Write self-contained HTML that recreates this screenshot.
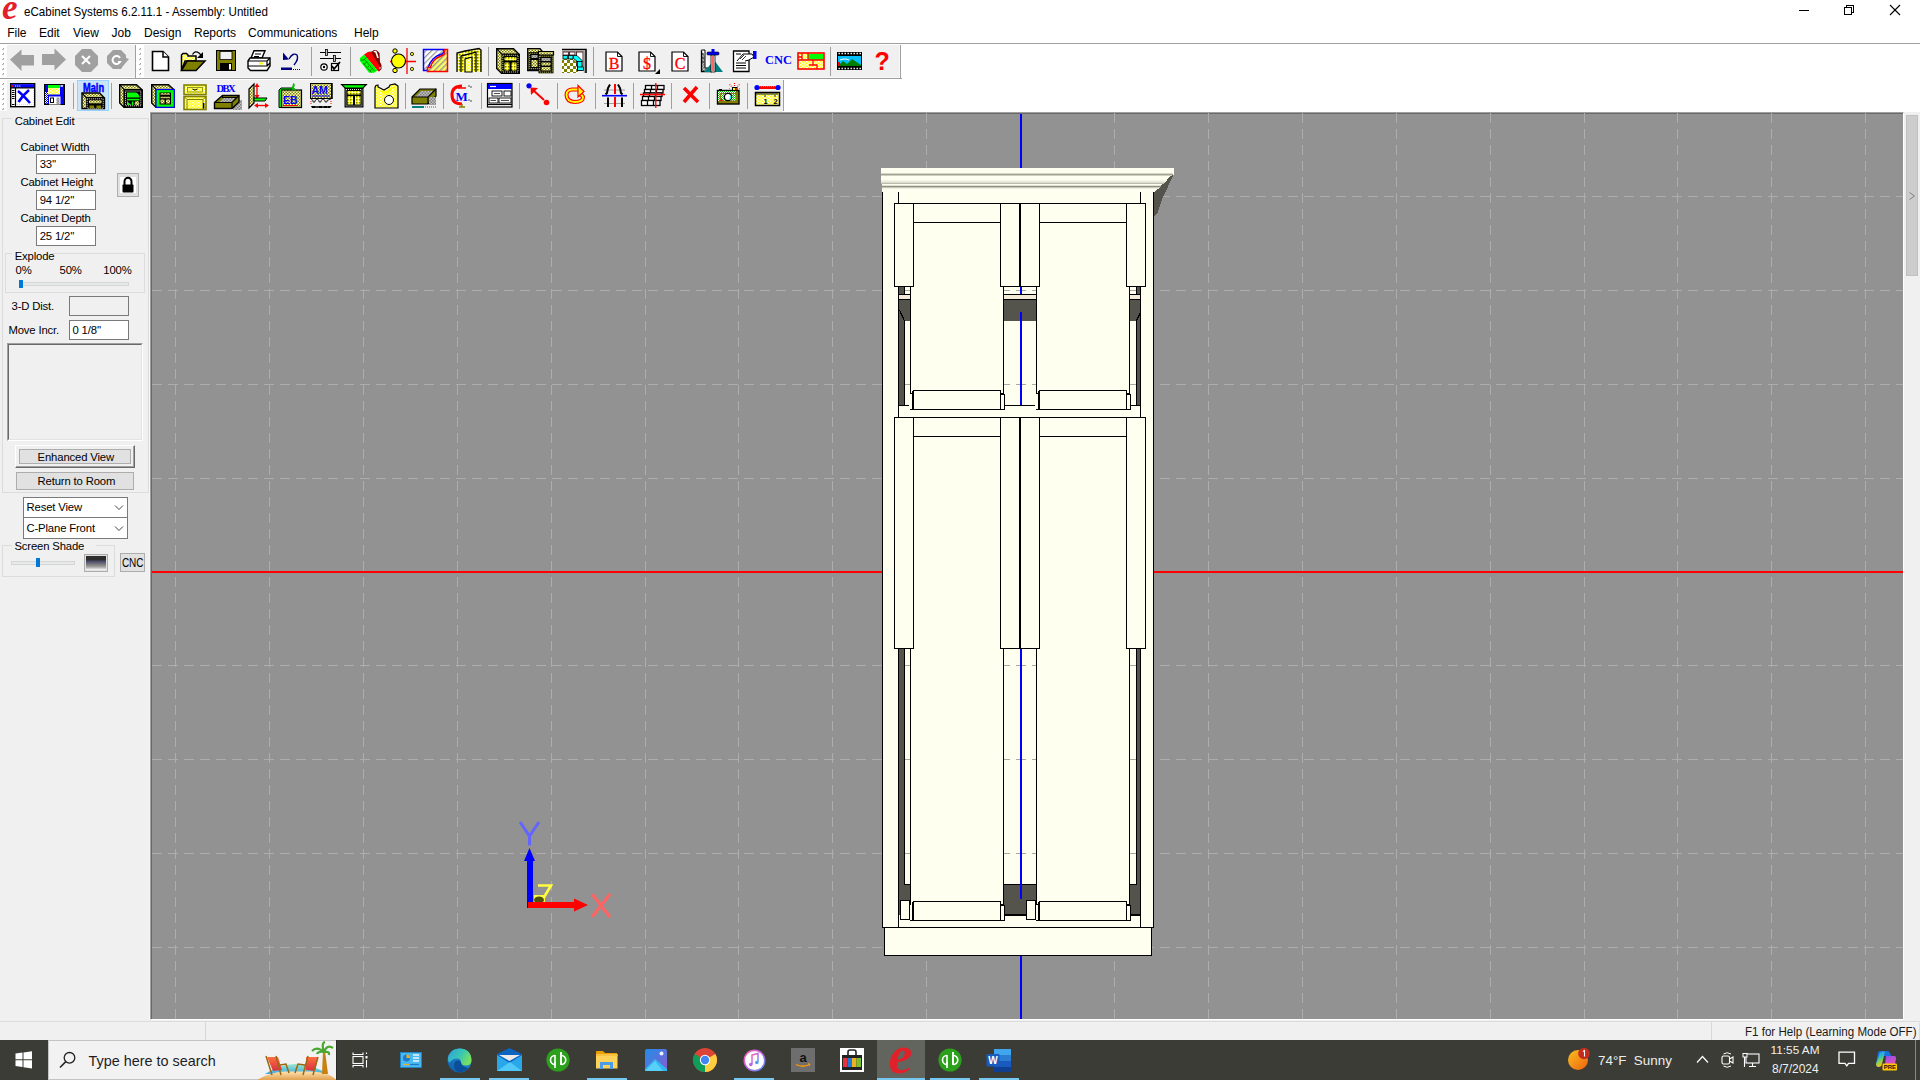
<!DOCTYPE html><html><head><meta charset="utf-8"><style>
*{margin:0;padding:0;box-sizing:border-box}
html,body{width:1920px;height:1080px;overflow:hidden;background:#fff;font-family:"Liberation Sans",sans-serif}
.t{position:absolute;line-height:1;white-space:pre}
svg{position:absolute;overflow:visible}
</style></head><body><div style="position:absolute;left:0px;top:0px;width:1920px;height:43px;background:#fff"></div>
<div class="t " style="left:23.50px;top:5.50px;font-size:12.4px;color:#000;transform:scaleX(0.935);transform-origin:left">eCabinet Systems 6.2.11.1 - Assembly: Untitled</div>
<div class="t" style="left:2px;top:-9.8px;font-family:'Liberation Serif';font-style:italic;font-weight:bold;font-size:35px;color:#e2202a">e</div>
<svg style="left:0;top:0" width="1920" height="43"><g stroke="#000" stroke-width="1" fill="none" shape-rendering="crispEdges"><line x1="1799" y1="10.5" x2="1809" y2="10.5"/><rect x="1844.5" y="7.5" width="7" height="7"/><polyline points="1846.5,7.5 1846.5,5.5 1853.5,5.5 1853.5,12.5 1851.5,12.5"/></g><g stroke="#000" stroke-width="1.1" fill="none"><line x1="1890" y1="5" x2="1900" y2="15"/><line x1="1900" y1="5" x2="1890" y2="15"/></g></svg>
<div class="t " style="left:7.20px;top:26.84px;font-size:12px;color:#000;">File</div>
<div class="t " style="left:39.00px;top:26.84px;font-size:12px;color:#000;">Edit</div>
<div class="t " style="left:73.00px;top:26.84px;font-size:12px;color:#000;">View</div>
<div class="t " style="left:111.50px;top:26.84px;font-size:12px;color:#000;">Job</div>
<div class="t " style="left:144.00px;top:26.84px;font-size:12px;color:#000;">Design</div>
<div class="t " style="left:194.00px;top:26.84px;font-size:12px;color:#000;">Reports</div>
<div class="t " style="left:248.00px;top:26.84px;font-size:12px;color:#000;">Communications</div>
<div class="t " style="left:354.00px;top:26.84px;font-size:12px;color:#000;">Help</div>
<div style="position:absolute;left:0px;top:43px;width:1920px;height:1px;background:#a0a0a0"></div>
<div style="position:absolute;left:0px;top:44px;width:1920px;height:69px;background:#fff"></div>
<div style="position:absolute;left:7px;top:45px;width:128px;height:32px;background:#f0f0f0"></div>
<div style="position:absolute;left:135px;top:45px;width:1px;height:33px;background:#a0a0a0"></div>
<div style="position:absolute;left:144px;top:45px;width:756px;height:32px;background:#f0f0f0"></div>
<div style="position:absolute;left:0px;top:78px;width:902px;height:1px;background:#a0a0a0"></div>
<div style="position:absolute;left:144px;top:77px;width:756px;height:1px;background:#f8f8f8"></div>
<div style="position:absolute;left:7px;top:80px;width:776px;height:31px;background:#f0f0f0"></div>
<div style="position:absolute;left:0px;top:111px;width:783px;height:1px;background:#f0f0f0"></div>
<div style="position:absolute;left:3px;top:48px;width:1px;height:1px;background:#a0a0a0"></div>
<div style="position:absolute;left:2px;top:49px;width:1px;height:1px;background:#b0b0b0"></div>
<div style="position:absolute;left:3px;top:49px;width:1px;height:1px;background:#c8c8c8"></div>
<div style="position:absolute;left:3px;top:53px;width:1px;height:1px;background:#a0a0a0"></div>
<div style="position:absolute;left:2px;top:54px;width:1px;height:1px;background:#b0b0b0"></div>
<div style="position:absolute;left:3px;top:54px;width:1px;height:1px;background:#c8c8c8"></div>
<div style="position:absolute;left:3px;top:58px;width:1px;height:1px;background:#a0a0a0"></div>
<div style="position:absolute;left:2px;top:59px;width:1px;height:1px;background:#b0b0b0"></div>
<div style="position:absolute;left:3px;top:59px;width:1px;height:1px;background:#c8c8c8"></div>
<div style="position:absolute;left:3px;top:63px;width:1px;height:1px;background:#a0a0a0"></div>
<div style="position:absolute;left:2px;top:64px;width:1px;height:1px;background:#b0b0b0"></div>
<div style="position:absolute;left:3px;top:64px;width:1px;height:1px;background:#c8c8c8"></div>
<div style="position:absolute;left:3px;top:68px;width:1px;height:1px;background:#a0a0a0"></div>
<div style="position:absolute;left:2px;top:69px;width:1px;height:1px;background:#b0b0b0"></div>
<div style="position:absolute;left:3px;top:69px;width:1px;height:1px;background:#c8c8c8"></div>
<div style="position:absolute;left:3px;top:73px;width:1px;height:1px;background:#a0a0a0"></div>
<div style="position:absolute;left:2px;top:74px;width:1px;height:1px;background:#b0b0b0"></div>
<div style="position:absolute;left:3px;top:74px;width:1px;height:1px;background:#c8c8c8"></div>
<div style="position:absolute;left:140px;top:48px;width:1px;height:1px;background:#a0a0a0"></div>
<div style="position:absolute;left:139px;top:49px;width:1px;height:1px;background:#b0b0b0"></div>
<div style="position:absolute;left:140px;top:49px;width:1px;height:1px;background:#c8c8c8"></div>
<div style="position:absolute;left:140px;top:53px;width:1px;height:1px;background:#a0a0a0"></div>
<div style="position:absolute;left:139px;top:54px;width:1px;height:1px;background:#b0b0b0"></div>
<div style="position:absolute;left:140px;top:54px;width:1px;height:1px;background:#c8c8c8"></div>
<div style="position:absolute;left:140px;top:58px;width:1px;height:1px;background:#a0a0a0"></div>
<div style="position:absolute;left:139px;top:59px;width:1px;height:1px;background:#b0b0b0"></div>
<div style="position:absolute;left:140px;top:59px;width:1px;height:1px;background:#c8c8c8"></div>
<div style="position:absolute;left:140px;top:63px;width:1px;height:1px;background:#a0a0a0"></div>
<div style="position:absolute;left:139px;top:64px;width:1px;height:1px;background:#b0b0b0"></div>
<div style="position:absolute;left:140px;top:64px;width:1px;height:1px;background:#c8c8c8"></div>
<div style="position:absolute;left:140px;top:68px;width:1px;height:1px;background:#a0a0a0"></div>
<div style="position:absolute;left:139px;top:69px;width:1px;height:1px;background:#b0b0b0"></div>
<div style="position:absolute;left:140px;top:69px;width:1px;height:1px;background:#c8c8c8"></div>
<div style="position:absolute;left:140px;top:73px;width:1px;height:1px;background:#a0a0a0"></div>
<div style="position:absolute;left:139px;top:74px;width:1px;height:1px;background:#b0b0b0"></div>
<div style="position:absolute;left:140px;top:74px;width:1px;height:1px;background:#c8c8c8"></div>
<div style="position:absolute;left:3px;top:83px;width:1px;height:1px;background:#a0a0a0"></div>
<div style="position:absolute;left:2px;top:84px;width:1px;height:1px;background:#b0b0b0"></div>
<div style="position:absolute;left:3px;top:84px;width:1px;height:1px;background:#c8c8c8"></div>
<div style="position:absolute;left:3px;top:88px;width:1px;height:1px;background:#a0a0a0"></div>
<div style="position:absolute;left:2px;top:89px;width:1px;height:1px;background:#b0b0b0"></div>
<div style="position:absolute;left:3px;top:89px;width:1px;height:1px;background:#c8c8c8"></div>
<div style="position:absolute;left:3px;top:93px;width:1px;height:1px;background:#a0a0a0"></div>
<div style="position:absolute;left:2px;top:94px;width:1px;height:1px;background:#b0b0b0"></div>
<div style="position:absolute;left:3px;top:94px;width:1px;height:1px;background:#c8c8c8"></div>
<div style="position:absolute;left:3px;top:98px;width:1px;height:1px;background:#a0a0a0"></div>
<div style="position:absolute;left:2px;top:99px;width:1px;height:1px;background:#b0b0b0"></div>
<div style="position:absolute;left:3px;top:99px;width:1px;height:1px;background:#c8c8c8"></div>
<div style="position:absolute;left:3px;top:103px;width:1px;height:1px;background:#a0a0a0"></div>
<div style="position:absolute;left:2px;top:104px;width:1px;height:1px;background:#b0b0b0"></div>
<div style="position:absolute;left:3px;top:104px;width:1px;height:1px;background:#c8c8c8"></div>
<div style="position:absolute;left:3px;top:108px;width:1px;height:1px;background:#a0a0a0"></div>
<div style="position:absolute;left:2px;top:109px;width:1px;height:1px;background:#b0b0b0"></div>
<div style="position:absolute;left:3px;top:109px;width:1px;height:1px;background:#c8c8c8"></div>
<svg width="0" height="0" style="position:absolute"><defs>
<pattern id="dy" width="3" height="3" patternUnits="userSpaceOnUse"><rect width="3" height="3" fill="#ffff00"/><rect x="0" y="0" width="1.5" height="1.5" fill="#808000"/><rect x="1.5" y="1.5" width="1.5" height="1.5" fill="#fffff0"/></pattern>
<pattern id="dyw" width="3" height="3" patternUnits="userSpaceOnUse"><rect width="3" height="3" fill="#ffff00"/><rect x="0" y="0" width="1.5" height="1.5" fill="#fff"/><rect x="1.5" y="1.5" width="1.5" height="1.5" fill="#fff"/></pattern>
<pattern id="dg" width="3" height="3" patternUnits="userSpaceOnUse"><rect width="3" height="3" fill="#c0c0c0"/><rect x="0" y="0" width="1.5" height="1.5" fill="#808080"/><rect x="1.5" y="1.5" width="1.5" height="1.5" fill="#808080"/></pattern>
<pattern id="dow" width="6" height="6" patternUnits="userSpaceOnUse"><rect width="6" height="6" fill="#fff"/><rect x="0" y="0" width="3" height="3" fill="#808000"/><rect x="3" y="3" width="3" height="3" fill="#808000"/></pattern>
<pattern id="hat" width="4" height="4" patternUnits="userSpaceOnUse" patternTransform="rotate(45)"><rect width="4" height="4" fill="#fff"/><rect width="1.3" height="4" fill="#9a9a9a"/></pattern>
<pattern id="haty" width="4" height="4" patternUnits="userSpaceOnUse" patternTransform="rotate(45)"><rect width="4" height="4" fill="#ffff60"/><rect width="1.5" height="4" fill="#9a9a9a"/></pattern>
<pattern id="dl" width="3" height="3" patternUnits="userSpaceOnUse"><rect width="3" height="3" fill="#ffffd0"/><rect x="0" y="0" width="1.5" height="1.5" fill="#808000"/><rect x="1.5" y="1.5" width="1.5" height="1.5" fill="#808000"/></pattern><pattern id="dyl" width="3" height="3" patternUnits="userSpaceOnUse"><rect width="3" height="3" fill="#ffff00"/><rect x="0" y="0" width="1.5" height="1.5" fill="#fff"/><rect x="1.5" y="1.5" width="1.5" height="1.5" fill="#ffffa0"/></pattern>
<pattern id="dgn" width="3" height="3" patternUnits="userSpaceOnUse"><rect width="3" height="3" fill="#00c000"/><rect x="0" y="0" width="1.5" height="1.5" fill="#606060"/><rect x="1.5" y="1.5" width="1.5" height="1.5" fill="#606060"/></pattern>
</defs></svg>
<svg style="left:10px;top:49px" width="25" height="23" viewBox="0 0 25 23"><polygon points="0,10.5 11.5,0.5 11.5,6 24,6 24,16.5 11.5,16.5 11.5,22 " fill="#a0a0a0"/></svg>
<svg style="left:42px;top:48px" width="25" height="23" viewBox="0 0 25 23"><polygon points="24,11.5 12.5,0.5 12.5,6 0,6 0,17 12.5,17 12.5,22.5" fill="#a0a0a0"/></svg>
<svg style="left:75px;top:49px" width="24" height="24" viewBox="0 0 24 24"><polygon points="7,0 16,0 23,7 23,16 16,23 7,23 0,16 0,7" fill="#a0a0a0"/><path d="M7,7 L15,15 M15,7 L7,15" stroke="#fff" stroke-width="2"/></svg>
<svg style="left:107px;top:50px" width="23" height="20" viewBox="0 0 23 20"><polygon points="6,0 14,0 19,5 19,8 22,9 16,16 14,19 6,19 0,13 0,6" fill="#a0a0a0"/><path d="M13,8 A4,4 0 1 0 13,12 L11,12" fill="none" stroke="#fff" stroke-width="2"/></svg>
<svg style="left:151px;top:50px" width="19" height="22" viewBox="0 0 19 22"><path d="M1.5,20.5 V1.5 H12 L17.5,7 V20.5 Z" fill="#fff" stroke="#000" stroke-width="1.6"/><path d="M12,1.5 V7 H17.5" fill="#fff" stroke="#000" stroke-width="1.5"/></svg>
<svg style="left:180px;top:50px" width="26" height="22" viewBox="0 0 26 22"><path d="M1.5,20.5 V5 L3,3.5 H6.5 L8,5 V6 H16 V11 H5 L1.5,20.5 Z" fill="url(#dyw)" stroke="#000" stroke-width="1.5"/><polygon points="1.5,20.5 7,11 25,11 16,20.5" fill="#808000" stroke="#000" stroke-width="1.5"/><path d="M12.5,4.5 Q15,0 19,3 L21,5" fill="none" stroke="#000" stroke-width="1.2"/><polygon points="23,2 23,8 17,8" fill="#000"/></svg>
<svg style="left:216px;top:50px" width="20" height="21" viewBox="0 0 20 21"><rect x="0.5" y="0.5" width="19" height="20" fill="#808000" stroke="#000"/><rect x="4" y="1.5" width="12" height="8" fill="#f0f0f0" stroke="#000" stroke-width="0.8"/><rect x="4" y="13" width="12" height="7.5" fill="#000"/><rect x="13" y="14" width="2" height="5.5" fill="#fff"/></svg>
<svg style="left:247px;top:50px" width="25" height="22" viewBox="0 0 25 22"><polygon points="7,0.8 18,0.8 15,8 4,8" fill="#fff" stroke="#000" stroke-width="1.4"/><path d="M8,4 H14 M7,6.5 H12" stroke="#000"/><path d="M1,11 L3,8 H17 L23,8 V16 L20,20.5 H3.5 L1,18 Z" fill="#fff" stroke="#000" stroke-width="1.4"/><path d="M1,11 H20 V16 H1 M20,11 L23,8 M20,16 L23,13" fill="none" stroke="#000" stroke-width="1.2"/><rect x="12" y="12.5" width="4" height="2" fill="#ff0"/></svg>
<svg style="left:280px;top:51px" width="23" height="20" viewBox="0 0 23 20"><path d="M9,8 Q13,1 17,4 Q19,8 14,14" fill="none" stroke="#000080" stroke-width="1.4"/><polygon points="3,1.5 9,8.5 3,9" fill="#000080"/><rect x="1" y="16.5" width="11" height="2.5" fill="#000080"/><path d="M13,18.5 H21" stroke="#000080" stroke-dasharray="1 1"/></svg>
<div style="position:absolute;left:311px;top:47px;width:1px;height:29px;background:#a0a0a0"></div>
<svg style="left:319px;top:49px" width="24" height="24" viewBox="0 0 24 24"><path d="M1,3.5 H22 M1,9.5 H22" stroke="#000" stroke-width="1.2"/><rect x="6.5" y="0.5" width="2" height="6" fill="#c0c0c0" stroke="#000" stroke-width="0.8"/><rect x="14.5" y="6.5" width="2" height="6" fill="#c0c0c0" stroke="#000" stroke-width="0.8"/><circle cx="5" cy="18" r="3.2" fill="#fff" stroke="#000" stroke-width="1.2"/><circle cx="5" cy="18" r="1.2" fill="#000"/><rect x="12.5" y="14.5" width="7" height="7" fill="#fff" stroke="#000" stroke-width="1.2"/><path d="M13,17 L15,20 L21,13" fill="none" stroke="#000" stroke-width="1.8"/></svg>
<div style="position:absolute;left:350px;top:47px;width:1px;height:29px;background:#a0a0a0"></div>
<svg style="left:359px;top:48px" width="23" height="26" viewBox="0 0 23 26"><polygon points="8.5,4 13,3.5 15,2 18,2.5 20.5,5 21,14 22.5,17 22.5,21 20,23.5 19,22" fill="#800000"/><polygon points="5,6.5 9,4 12,4 20.5,18 21,21.5 19.5,23.5 18.5,22.5" fill="#ff0000"/><polygon points="1,10 5,6.5 18.5,22.5 15,24.8 10,24.8 1,13" fill="#00ff00"/><path d="M1.5,12 L5,12 L7.5,9 M4,15 L12.5,24.5 M5.5,11.5 L15.5,23 M5,16.5 L8,13.5 M8,20 L11,17 M11,23 L14,20" stroke="#008000" stroke-width="0.9" fill="none"/><path d="M15,4 Q16,3 17,4 L19,10" stroke="#fff" stroke-width="1.6" fill="none"/><circle cx="21" cy="20" r="0.8" fill="#fff"/></svg>
<svg style="left:389px;top:48px" width="28" height="26" viewBox="0 0 28 26"><path d="M1,13.5 H27 M18,0 V26" stroke="#ff0000" stroke-width="1.3"/><circle cx="9.5" cy="13" r="7" fill="#ffff00" stroke="#000" stroke-width="1.2"/><circle cx="6" cy="3" r="2.2" fill="#ff0" stroke="#000" stroke-width="1"/><circle cx="6" cy="22.5" r="2.2" fill="#ff0" stroke="#000" stroke-width="1"/><circle cx="23" cy="6" r="1.6" fill="#ff0" stroke="#000" stroke-width="0.8"/><circle cx="23" cy="21" r="1.6" fill="#ff0" stroke="#000" stroke-width="0.8"/></svg>
<svg style="left:422px;top:48px" width="28" height="26" viewBox="0 0 28 26"><path d="M1.5,1.5 H22 V4 L20,6 L15,8 L11,11 L8,15 L6.5,19 L5,22.5 H1.5 Z" fill="url(#hat)" stroke="#0000ff" stroke-width="1.5"/><path d="M25.5,1.5 V23.5 H5.5 V19.5 H8.5 L9.5,16 L12,12.5 L15,10 L19,8 L22,6.5 L23,1.5 Z" fill="url(#haty)" stroke="#ff0000" stroke-width="1.5"/></svg>
<svg style="left:456px;top:48px" width="26" height="25" viewBox="0 0 26 25"><path d="M1,24 V5 L9,3 L23,0.5 L25,2 V24" fill="url(#dy)" stroke="#000" stroke-width="1.3"/><path d="M5,24 V8 L20,4 V24" fill="none" stroke="#000" stroke-width="1.3"/><path d="M9,24 V11 L16,9 V24 Z" fill="url(#dyw)" stroke="#000" stroke-width="1.2"/></svg>
<div style="position:absolute;left:488px;top:47px;width:1px;height:29px;background:#a0a0a0"></div>
<svg style="left:496px;top:48px" width="24" height="26" viewBox="0 0 24 26"><polygon points="0.7,0.7 17.5,0.7 23.3,6.5 23.3,25.3 5.5,25.3 0.7,20.5" fill="url(#dl)" stroke="#000" stroke-width="1.4" stroke-linejoin="miter"/><path d="M0.7,0.7 L5.5,6 H23.3" stroke="#000" stroke-width="1.2" fill="none"/><rect x="5.5" y="6" width="17.8" height="19.3" fill="#000"/><rect x="6.8" y="7.3" width="15.2" height="16.7" fill="none" stroke="#ffff80" stroke-width="0.9" stroke-dasharray="1 1"/><rect x="8.5" y="9" width="12" height="3.5" rx="1" fill="url(#dy)"/><rect x="8.5" y="14.5" width="5" height="8" rx="1" fill="url(#dy)"/><rect x="15.5" y="14.5" width="5" height="8" rx="1" fill="url(#dy)"/></svg>
<svg style="left:527px;top:48px" width="28" height="26" viewBox="0 0 28 26"><polygon points="0.7,0.7 13,0.7 15,3 15,22.5 0.7,22.5" fill="url(#dl)" stroke="#000" stroke-width="1.3" stroke-linejoin="miter"/><rect x="1.5" y="4" width="12" height="18" fill="#000"/><rect x="2.7" y="5.2" width="9.5" height="15.5" fill="none" stroke="#ffff80" stroke-width="0.9" stroke-dasharray="1 1"/><rect x="4.5" y="7" width="6" height="3" fill="url(#dg)"/><rect x="4.5" y="12" width="6" height="7" fill="url(#dl)"/><polygon points="11.5,3.5 26.5,3.5 26.5,7 11.5,7" fill="url(#dl)" stroke="#000" stroke-width="1.2"/><rect x="11.5" y="7" width="15" height="18.3" fill="#000"/><rect x="12.7" y="8.2" width="12.6" height="15.9" fill="none" stroke="#ffff80" stroke-width="0.9" stroke-dasharray="1 1"/><rect x="14.5" y="10" width="9" height="3" fill="url(#dg)"/><rect x="14.5" y="14.5" width="9" height="3" fill="url(#dl)"/><rect x="14.5" y="19" width="9" height="3.5" fill="url(#dl)"/></svg>
<svg style="left:561px;top:48px" width="26" height="26" viewBox="0 0 26 26"><polygon points="1,11 12,11 17,16 17,25 1,25" fill="url(#dow)"/><path d="M1,1.5 H25 V25" fill="none" stroke="#000" stroke-width="1.6"/><path d="M1,3.2 H23.3 V25" fill="none" stroke="#909090" stroke-width="1"/><g fill="#fff" stroke="#300" stroke-width="0.8"><rect x="2" y="4" width="5.5" height="3"/><rect x="8.5" y="4" width="5.5" height="3"/><rect x="15.5" y="4" width="6.5" height="14"/></g><g fill="#00ffff" stroke="#000" stroke-width="0.8"><rect x="2" y="7.5" width="4.5" height="3.5"/><rect x="7.5" y="7.5" width="4.5" height="3.5"/><polygon points="12.5,7.5 16,7.5 21,12.5 21,14 17,14 12.5,10.5"/><rect x="16.5" y="13.5" width="4.5" height="9"/><rect x="16.5" y="19" width="6" height="3.5"/></g></svg>
<div style="position:absolute;left:593px;top:47px;width:1px;height:29px;background:#a0a0a0"></div>
<svg style="left:604.5px;top:50.5px" width="19" height="22" viewBox="0 0 19 22"><path d="M1,20 V1 H12.5 L17,5.5 V20 Z" fill="#fff" stroke="#000" stroke-width="1.2"/><path d="M12.5,1 V5.5 H17" fill="none" stroke="#000" stroke-width="0.9"/><text x="9" y="17.8" font-family="Liberation Serif" font-size="16" fill="#ff0000" text-anchor="middle" stroke="#ff0000" stroke-width="0.3">B</text></svg>
<svg style="left:637.5px;top:50.5px" width="19" height="22" viewBox="0 0 19 22"><path d="M1,20 V1 H12.5 L17,5.5 V20 Z" fill="#fff" stroke="#000" stroke-width="1.2"/><path d="M12.5,1 V5.5 H17" fill="none" stroke="#000" stroke-width="0.9"/><text x="9" y="17.8" font-family="Liberation Serif" font-size="16" fill="#ff0000" text-anchor="middle" stroke="#ff0000" stroke-width="0.3">$</text></svg>
<svg style="left:670.5px;top:50.5px" width="19" height="22" viewBox="0 0 19 22"><path d="M1,20 V1 H12.5 L17,5.5 V20 Z" fill="#fff" stroke="#000" stroke-width="1.2"/><path d="M12.5,1 V5.5 H17" fill="none" stroke="#000" stroke-width="0.9"/><text x="9" y="17.8" font-family="Liberation Serif" font-size="16" fill="#ff0000" text-anchor="middle" stroke="#ff0000" stroke-width="0.3">C</text></svg>
<svg style="left:655px;top:69px" width="6" height="5" viewBox="0 0 6 5"><polygon points="5,0 5,5 0,5" fill="#000"/></svg>
<svg style="left:700px;top:49px" width="25" height="24" viewBox="0 0 25 24"><path d="M1.5,1 V22.5 H12" fill="url(#dg)" stroke="#000" stroke-width="1.3"/><path d="M1.5,1 H5 V19 H12" fill="#fff" stroke="#000" stroke-width="1"/><path d="M2,5 H4 M2,9 H4 M2,13 H4 M8,20 V22" stroke="#000" stroke-width="0.8"/><polygon points="4,23 14,11 23,23" fill="#008080"/><rect x="11" y="6" width="4" height="17" fill="#fff" stroke="#000" stroke-width="0.8"/><path d="M13,7 V22" stroke="#ff0000" stroke-width="1.2"/><rect x="7" y="3" width="12" height="3" rx="1" fill="#0000ff" stroke="#000" stroke-width="0.6"/><rect x="11.5" y="0" width="3" height="3" fill="#0000ff"/></svg>
<svg style="left:732px;top:49px" width="26" height="24" viewBox="0 0 26 24"><path d="M1.5,2 H17 V22.5 H1.5 Z" fill="#fff" stroke="#000" stroke-width="1.3"/><path d="M4,14 H14 M4,16.5 H14 M4,19 H14 M4,5 H9" stroke="#000"/><path d="M5,12 L11,5 L20,5 L22,8 L17,11 L13,12" fill="#fff" stroke="#000" stroke-width="1"/><path d="M8,10 L12,6 M10,11 L14,7" stroke="#000" stroke-width="0.8"/><rect x="21" y="2" width="3.5" height="8" fill="#0000ff"/></svg>
<div class="t " style="left:765.00px;top:55.27px;font-size:11.5px;color:#0000ff;font-family:'Liberation Serif';font-weight:bold;transform:scaleX(1.08);transform-origin:left">CNC</div>
<svg style="left:797px;top:52px" width="28" height="18" viewBox="0 0 28 18"><rect x="1" y="1" width="26" height="16" fill="url(#dyw)" stroke="#ff0000" stroke-width="1.6"/><rect x="11" y="2" width="15" height="6" fill="#00ff00"/><path d="M5,1 V8 M1,5 H5 M11,1 V8 M1,8 H27 M16,8 V13 M12,13 H20 V17" fill="none" stroke="#ff0000" stroke-width="1.3"/></svg>
<div style="position:absolute;left:830px;top:47px;width:1px;height:29px;background:#a0a0a0"></div>
<svg style="left:837px;top:52px" width="26" height="18" viewBox="0 0 26 18"><rect x="0" y="0" width="25" height="18" fill="#000"/><path d="M1.5,1.5 H24 M1.5,16.5 H24" stroke="#fff" stroke-width="1.4" stroke-dasharray="1.4 1.6"/><rect x="1" y="4" width="23" height="10" fill="#00c0ff"/><path d="M1,14 L6,9 L10,12 L15,7 L24,13 V14 Z" fill="#008000"/><path d="M3,8 Q8,6 12,8" stroke="#fff" stroke-width="1.2" fill="none"/><rect x="1" y="10" width="2" height="4" fill="#ff0000"/></svg>
<div class="t " style="left:874.50px;top:48.84px;font-size:25px;color:#ff0000;font-family:'Liberation Sans';font-weight:bold;transform:scaleX(1.0);transform-origin:left">?</div>
<div style="position:absolute;left:900px;top:45px;width:1px;height:34px;background:#a0a0a0"></div>
<div style="position:absolute;left:899px;top:45px;width:1px;height:33px;background:#f8f8f8"></div>
<svg style="left:10px;top:83px" width="26" height="25" viewBox="0 0 26 25"><rect x="0.7" y="0.7" width="24" height="23" fill="#fff" stroke="#000" stroke-width="1.4"/><rect x="1.2" y="1.2" width="23" height="3.6" fill="#0000ff"/><rect x="2" y="2.3" width="1.5" height="1.5" fill="#ff0000"/><path d="M5,3 H11" stroke="#fff" stroke-width="1.2" stroke-dasharray="1.2 0.9"/><path d="M0.7,4.8 H25 M5.5,5 V23.5" stroke="#000" stroke-width="1.2"/><path d="M2,7.5 H4.5 M2,9.5 H4.5 M2,11.5 H4.5 M2,13.5 H4.5 M2,15.5 H4.5 M2,21.5 H4.5" stroke="#000" stroke-width="1"/><path d="M8,8 Q13,12 20,20 M19,7 Q13,12 8.5,19" stroke="#0000ff" stroke-width="2.6" fill="none"/><path d="M7,21.5 H24 M23.5,7 V21" stroke="#c0c0c0" stroke-width="0.6" stroke-dasharray="1 1"/></svg>
<svg style="left:44px;top:84px" width="21" height="21" viewBox="0 0 21 21"><defs><pattern id="bw" width="2" height="2" patternUnits="userSpaceOnUse"><rect width="2" height="2" fill="#fff"/><rect width="1" height="1" fill="#0000ff"/><rect x="1" y="1" width="1" height="1" fill="#0000ff"/></pattern></defs><rect x="0.5" y="0.5" width="20" height="20" fill="#0000ff" stroke="#000" stroke-width="1"/><rect x="1" y="8" width="3" height="11.5" fill="url(#bw)"/><rect x="4" y="1" width="12" height="3" fill="#00ff00"/><rect x="4" y="4" width="12" height="6.5" fill="url(#dyw)"/><rect x="16.5" y="1.2" width="2.5" height="1.5" fill="#fff"/><rect x="5" y="12.5" width="11.5" height="8" fill="#fff"/><rect x="6.5" y="14" width="3" height="4.5" fill="none" stroke="#000"/><rect x="12.5" y="13.5" width="3" height="6.5" fill="url(#dg)"/></svg>
<div style="position:absolute;left:73px;top:83px;width:1px;height:26px;background:#a0a0a0"></div>
<div style="position:absolute;left:77px;top:80px;width:32px;height:31px;background:#cce4f7;border:1px solid #99d1ff"></div>
<div class="t " style="left:82.80px;top:81.57px;font-size:12.2px;color:#0000ff;font-family:'Liberation Sans';font-weight:bold;-webkit-text-stroke:0.5px #0000ff;transform:scaleX(0.76);transform-origin:left">Main</div>
<svg style="left:81px;top:92px" width="25" height="18" viewBox="0 0 25 18"><polygon points="1,1 18.5,1 23.5,6 23.5,16.5 1,16.5" fill="url(#dl)" stroke="#000" stroke-width="1.4" stroke-linejoin="miter"/><path d="M1,1 L5,5.5 H23.5" stroke="#000" stroke-width="1.2" fill="none"/><rect x="5" y="5.5" width="18.5" height="11" fill="#000"/><rect x="6.2" y="6.8" width="16" height="9.5" fill="none" stroke="#fff" stroke-width="0.9" stroke-dasharray="1 1"/><rect x="8" y="8.3" width="12.5" height="3" fill="url(#dl)"/><rect x="8.5" y="13.5" width="4.5" height="3" fill="#808000"/><rect x="15.5" y="13.5" width="4.5" height="3" fill="#808000"/></svg>
<div style="position:absolute;left:111px;top:83px;width:1px;height:26px;background:#a0a0a0"></div>
<svg style="left:119px;top:84px" width="24" height="24" viewBox="0 0 24 24"><polygon points="0.7,0.7 17.5,0.7 23.3,6 23.3,23.3 5,23.3 0.7,19" fill="url(#dl)" stroke="#000" stroke-width="1.4" stroke-linejoin="miter"/><path d="M0.7,0.7 L5,5.5 H23.3 M5,5.5 V23.3" stroke="#000" stroke-width="1.2" fill="none"/><rect x="5" y="5.5" width="18.3" height="17.8" fill="#000"/><rect x="6.5" y="7" width="15.3" height="14.8" fill="none" stroke="#fffff0" stroke-width="0.9" stroke-dasharray="1 1"/><polygon points="8,8.5 17,8.5 20.5,12 20.5,13.5 8,13.5" fill="#00ff00"/><path d="M17.5,9 L20,11.5" stroke="#fff" stroke-width="0.8" stroke-dasharray="1 1"/><rect x="8" y="14.8" width="12.5" height="1.6" fill="#00ff00"/><polygon points="8,17.5 12,21 8,21" fill="#00ff00"/><path d="M8,17.5 L11.5,20.5" stroke="#fff" stroke-width="0.7" stroke-dasharray="1 1"/><rect x="12.8" y="17.5" width="1.5" height="3.8" fill="#00ff00"/><circle cx="18" cy="19.3" r="2.3" fill="url(#dl)"/></svg>
<svg style="left:151px;top:84px" width="24" height="24" viewBox="0 0 24 24"><polygon points="0.7,0.7 17.5,0.7 23.3,6 23.3,23.3 5,23.3 0.7,19" fill="url(#dl)" stroke="#000" stroke-width="1.4" stroke-linejoin="miter"/><path d="M0.7,0.7 L5,5.5 H23.3 M5,5.5 V23.3" stroke="#000" stroke-width="1.2" fill="none"/><rect x="5" y="5.5" width="18.3" height="17.8" fill="#00ff00" stroke="#0000ff" stroke-width="1.2"/><rect x="8.5" y="8.5" width="11.5" height="12" fill="#000"/><path d="M9.5,10 H19 M9.5,13.5 H19" stroke="url(#dl)" stroke-width="1.6"/><rect x="9.5" y="15.5" width="4" height="4" fill="url(#dl)"/><rect x="15" y="15.5" width="4" height="4" fill="url(#dl)"/></svg>
<svg style="left:183px;top:84px" width="24" height="26" viewBox="0 0 24 26"><rect x="1" y="1" width="22" height="9.5" fill="url(#dyl)" stroke="#808000" stroke-width="1.6"/><rect x="4.5" y="3.5" width="15" height="4.5" fill="url(#dyl)" stroke="#808000" stroke-width="0.8"/><path d="M9.5,5 Q12,7.2 14.5,5" stroke="#000" stroke-width="1" fill="none"/><rect x="1" y="12.5" width="22" height="13" fill="url(#dyl)" stroke="#808000" stroke-width="1.6"/><path d="M1,12.5 L4,15.5 H20 L23,12.5 M4,15.5 V26 M20,15.5 V26" fill="none" stroke="#808000" stroke-width="1"/><rect x="20" y="19" width="1.4" height="5.5" fill="#000"/></svg>
<svg style="left:213px;top:83px" width="29" height="27" viewBox="0 0 29 27"><text x="3.5" y="8.8" font-family="Liberation Serif" font-weight="bold" font-size="10.5" fill="#0000ff" textLength="19">DBX</text><rect x="20" y="17" width="9" height="10" fill="url(#dg)"/><polygon points="1.5,19.5 9.5,12.5 26,12.5 26,19 19,25.5 1.5,25.5" fill="#808000" stroke="#000" stroke-width="1.4" stroke-linejoin="miter"/><polygon points="6,19.5 11.5,14.5 24,14.5 18.5,19.5" fill="url(#dg)"/><path d="M1.5,19.5 H19 L26,12.5 M19,19.5 V25.5 M9.5,12.5 V14.5 H24" fill="none" stroke="#000" stroke-width="1.2"/></svg>
<svg style="left:248px;top:83px" width="22" height="26" viewBox="0 0 22 26"><polygon points="1,25 1,6 6,1 6,20" fill="url(#dl)" stroke="#000" stroke-width="1.2"/><path d="M9,2 V14" stroke="#ff0000" stroke-width="1.4"/><polygon points="9,0 6.5,4 11.5,4" fill="#ff0000"/><polygon points="9,16 6.5,12 11.5,12" fill="#ff0000"/><polygon points="6,15 19,15 17,18 6,18" fill="#00ff00" stroke="#000" stroke-width="1"/><path d="M8,22.5 H20" stroke="#ff0000" stroke-width="1.4"/><polygon points="6,22.5 10,20 10,25" fill="#ff0000"/><polygon points="21,22.5 17,20 17,25" fill="#ff0000"/></svg>
<svg style="left:278px;top:84px" width="25" height="24" viewBox="0 0 25 24"><polygon points="1,23.5 1,6 3,4 16,4 16,23.5" fill="#00ff00" stroke="#000" stroke-width="1"/><rect x="3.5" y="6" width="20" height="17.5" fill="url(#dl)" stroke="#000" stroke-width="1.2"/><path d="M14,4 Q17,1 15,0 M14,4 L17,6" stroke="#00c000" stroke-width="2" fill="none"/><text x="5" y="20" font-family="Liberation Sans" font-weight="bold" font-size="10.5" fill="#0000ff">EB</text><path d="M5,21.5 H20" stroke="#ff0000" stroke-width="1"/></svg>
<svg style="left:310px;top:83px" width="24" height="25" viewBox="0 0 24 25"><rect x="0.5" y="0.5" width="21" height="15" fill="url(#dl)" stroke="#000" stroke-width="1"/><path d="M22,0 V16" stroke="#000" stroke-width="1.5"/><text x="1.5" y="11" font-family="Liberation Sans" font-weight="bold" font-size="10.5" fill="#0000ff">AM</text><path d="M2,13 H20" stroke="#0000ff" stroke-width="1"/><path d="M1,16 L3,17.5 V19 H5 V17.5 L7,16 L9,17.5 V19 H11 V17.5 L13,16 L15,17.5 V19 H17 V17.5 L21,16" fill="none" stroke="#000" stroke-width="0.8"/><path d="M1,18 V22 M21,18 V22" stroke="#ff0000" stroke-dasharray="1 1"/><polygon points="1,23 22,23 20,25 2,25" fill="#000"/><path d="M5,24 H9 M12,24 H14 M17,24 H18" stroke="#808080" stroke-width="0.8"/></svg>
<svg style="left:341px;top:84px" width="26" height="24" viewBox="0 0 26 24"><polygon points="0.7,0.7 25.3,0.7 22,4 4,4" fill="#00ff00" stroke="#000" stroke-width="1.2" stroke-linejoin="miter"/><rect x="3.5" y="4" width="19" height="19.5" fill="#000"/><rect x="5" y="5.5" width="16" height="16.5" fill="none" stroke="#fffff0" stroke-width="0.9" stroke-dasharray="1 1"/><rect x="6.5" y="7" width="13" height="3.5" fill="url(#dy)"/><rect x="6.5" y="12" width="5.5" height="8.5" fill="url(#dy)"/><rect x="14" y="12" width="5.5" height="8.5" fill="url(#dy)"/></svg>
<svg style="left:374px;top:83px" width="26" height="26" viewBox="0 0 26 26"><path d="M1,25 V5 Q1,2 4,2 V4 L10,7 L15,4 L16,2 L21,1 L24,3 V25 Z" fill="url(#dyl)" stroke="#000" stroke-width="1.2"/><path d="M7,8 L11,10 L16,7 L18,5 L21,4" stroke="#ff0" stroke-width="2" fill="none"/><circle cx="15" cy="17" r="4.5" fill="#fff" stroke="#000" stroke-width="1"/></svg>
<div style="position:absolute;left:405px;top:83px;width:1px;height:26px;background:#a0a0a0"></div>
<svg style="left:411px;top:85px" width="26" height="24" viewBox="0 0 26 24"><polygon points="1,12 9,4 25,4 25,11 17,19 1,19" fill="#808000" stroke="#000" stroke-width="1.2"/><polygon points="4,12 10,6 23,6 17,12" fill="url(#dg)"/><path d="M1,12 H17 L25,4 M17,12 V19" fill="none" stroke="#000" stroke-width="1.2"/><rect x="18" y="12" width="7" height="8" fill="url(#dg)"/><rect x="1" y="21" width="12" height="2" fill="#008080"/><path d="M14,22 H25" stroke="#008080" stroke-dasharray="1 1"/></svg>
<div style="position:absolute;left:443px;top:83px;width:1px;height:26px;background:#a0a0a0"></div>
<svg style="left:450px;top:84px" width="24" height="24" viewBox="0 0 24 24"><path d="M12,2 Q2,2 2,11 Q2,20 12,20" fill="none" stroke="#ff0000" stroke-width="3"/><text x="5.5" y="16.5" font-family="Liberation Serif" font-weight="bold" font-size="13" fill="#0000ff">M</text><path d="M8,4 H16" stroke="#ff0000" stroke-width="1.5"/><path d="M12,20 V23 M9,23 H15" stroke="#808000" stroke-width="1.3"/><path d="M19,1 V3 M21,2 V4 M19,15 V17 M21,16 V18" stroke="#404040" stroke-width="0.9"/></svg>
<div style="position:absolute;left:481px;top:83px;width:1px;height:26px;background:#a0a0a0"></div>
<svg style="left:487px;top:83px" width="26" height="25" viewBox="0 0 26 25"><rect x="0.5" y="0.5" width="24.5" height="23.5" fill="#fff" stroke="#000" stroke-width="1.2"/><rect x="1" y="1" width="24" height="5" fill="#0000ff"/><path d="M3,3.5 H9" stroke="#fff" stroke-width="1.2"/><rect x="5" y="8" width="10" height="5" fill="#fff" stroke="#000" stroke-width="0.9"/><rect x="17" y="8" width="7" height="5" fill="#fff" stroke="#000" stroke-width="0.9"/><rect x="2" y="15" width="9" height="5" fill="#fff" stroke="#000" stroke-width="0.9"/><rect x="12" y="15" width="12" height="5" fill="#fff" stroke="#000" stroke-width="0.9"/><path d="M7,10.5 H13 M3.5,17.5 H9 M14,17.5 H22" stroke="#000" stroke-width="0.7"/><path d="M1,21.5 H25" stroke="#000" stroke-width="1.2"/></svg>
<div style="position:absolute;left:519px;top:83px;width:1px;height:26px;background:#a0a0a0"></div>
<svg style="left:526px;top:83px" width="25" height="24" viewBox="0 0 25 24"><circle cx="3" cy="2.8" r="2.6" fill="#0000ff"/><circle cx="20.5" cy="19.5" r="2.8" fill="#ff0000"/><path d="M7,7 L18,17" stroke="#ff0000" stroke-width="2"/><polygon points="4.5,4.5 12,5 5,12" fill="#ff0000"/></svg>
<div style="position:absolute;left:557px;top:83px;width:1px;height:26px;background:#a0a0a0"></div>
<svg style="left:565px;top:85px" width="21" height="19" viewBox="0 0 21 19"><path d="M13,4.5 H7 Q1.5,5 1.5,10 Q2,17 10,17 Q18,17 18,12 Q17,9 13,9" fill="none" stroke="#ff0000" stroke-width="4"/><path d="M13,4.5 H7 Q1.5,5 1.5,10 Q2,17 10,17 Q18,17 18,12 Q17,9 13,9" fill="none" stroke="#ffff00" stroke-width="1.8"/><polygon points="13,0.5 19,6.5 13,12" fill="#ffff00" stroke="#ff0000" stroke-width="1.2"/></svg>
<div style="position:absolute;left:595px;top:83px;width:1px;height:26px;background:#a0a0a0"></div>
<svg style="left:598px;top:80px" width="32" height="30" viewBox="0 0 32 30"><path d="M6,10 H27 M6,23.5 H27" stroke="#a0a0a0" stroke-width="1.2"/><path d="M12,4.5 L10,8 L9,13 L7.5,14.5 M20,4.5 L22,8 L23,13 L24.5,14.5" fill="none" stroke="#000" stroke-width="2"/><path d="M10,17.5 V27 M24,17.5 V27" stroke="#000" stroke-width="2"/><path d="M17,4 V14 M17,17 V27" stroke="#ff0000" stroke-width="2"/><path d="M4,15.7 H29" stroke="#0000ff" stroke-width="1.6"/></svg>
<div style="position:absolute;left:633px;top:83px;width:1px;height:26px;background:#a0a0a0"></div>
<svg style="left:638px;top:80px" width="30" height="30" viewBox="0 0 30 30"><g fill="#fff" stroke="#000" stroke-width="1.3"><rect x="7.5" y="5.5" width="18.5" height="4"/><path d="M13.5,5.5 V9.5 M19.5,5.5 V9.5"/><rect x="6.5" y="9.5" width="18.5" height="3.5"/><path d="M12.5,9.5 V13 M18.5,9.5 V13"/><rect x="5.5" y="13" width="18.5" height="3.5"/><path d="M11.5,13 V16.5 M17.5,13 V16.5"/><rect x="4.5" y="16.5" width="18.5" height="4"/><path d="M10.5,16.5 V20.5 M16.5,16.5 V20.5"/><rect x="3.5" y="20.5" width="18.5" height="5"/><path d="M9.5,20.5 V25.5 M15.5,20.5 V25.5"/></g><path d="M17.8,3 V28 M2,14.5 H27" stroke="#ff0000" stroke-width="1.3"/></svg>
<div style="position:absolute;left:671px;top:83px;width:1px;height:26px;background:#a0a0a0"></div>
<svg style="left:681px;top:85px" width="20" height="20" viewBox="0 0 20 20"><path d="M3,3 Q10,10 17,17 M16,2 Q9,10 3,17" stroke="#ff0000" stroke-width="3.5" fill="none"/></svg>
<div style="position:absolute;left:709px;top:83px;width:1px;height:26px;background:#a0a0a0"></div>
<svg style="left:713px;top:80px" width="30" height="26" viewBox="0 0 30 26"><defs><pattern id="gw" width="2" height="2" patternUnits="userSpaceOnUse"><rect width="2" height="2" fill="#fff"/><rect width="1" height="1" fill="#00c000"/><rect x="1" y="1" width="1" height="1" fill="#00c000"/></pattern></defs><rect x="4.5" y="10.5" width="21.5" height="13.5" fill="#808000" stroke="#000" stroke-width="1.4"/><rect x="5" y="11" width="18" height="10" fill="url(#gw)"/><rect x="7.5" y="13.5" width="15.5" height="7.5" fill="none" stroke="#808000" stroke-width="0.9"/><circle cx="15" cy="17" r="3.6" fill="#fff" stroke="#000" stroke-width="1.3"/><path d="M16,19.5 A3,3 0 0 0 17.5,16" stroke="#00ffff" stroke-width="1.2" fill="none"/><polygon points="7,21 8.5,18.5 10,21" fill="#ff0000"/><rect x="6" y="9" width="3" height="2" fill="#000"/><rect x="19.5" y="7.5" width="4.5" height="3" fill="#ffff00" stroke="#000" stroke-width="1"/><rect x="22" y="8" width="1.5" height="2" fill="#ff0000"/><path d="M16.5,4.5 L18.5,6.5 M21.5,3 V6 M26.5,4.5 L24.5,6.5 M16.5,8.5 H17 M26.5,8.5 H27" stroke="#ff0000" stroke-width="1.1" stroke-dasharray="1 1"/></svg>
<div style="position:absolute;left:747px;top:83px;width:1px;height:26px;background:#a0a0a0"></div>
<svg style="left:753px;top:84px" width="28" height="24" viewBox="0 0 28 24"><rect x="2.5" y="8.5" width="24" height="13" fill="url(#dyw)" stroke="#000" stroke-width="1.5"/><path d="M4,9 V11 M6,9 V11 M8,9 V11 M10,9 V11 M12,9 V13 M14,9 V11 M16,9 V11 M18,9 V11 M20,9 V11 M22,9 V13 M24,9 V11" stroke="#000" stroke-width="0.9"/><text x="10.5" y="19.5" font-family="Liberation Sans" font-weight="bold" font-size="7.5" fill="#000">1</text><text x="20.5" y="19.5" font-family="Liberation Sans" font-weight="bold" font-size="7.5" fill="#000">2</text><rect x="4" y="2.5" width="21" height="2.5" fill="#ff0000"/><path d="M5,2.5 H24" stroke="#ff0000" stroke-width="1" stroke-dasharray="1 1"/><circle cx="4" cy="3.5" r="2.6" fill="#0000ff"/><circle cx="25" cy="3.5" r="2.6" fill="#0000ff"/></svg>
<div style="position:absolute;left:783px;top:80px;width:1px;height:31px;background:#a0a0a0"></div>
<div style="position:absolute;left:0px;top:112px;width:150px;height:908px;background:#f0f0f0"></div>
<div style="position:absolute;left:2px;top:118px;width:147px;height:375px;border:1px solid #dcdcdc"></div>
<div style="position:absolute;left:12px;top:112px;width:62px;height:12px;background:#f0f0f0"></div>
<div class="t " style="left:14.70px;top:116.23px;font-size:11.3px;color:#000;letter-spacing:-0.15px;">Cabinet Edit</div>
<div class="t " style="left:20.40px;top:142.43px;font-size:11.3px;color:#000;letter-spacing:-0.15px;">Cabinet Width</div>
<div style="position:absolute;left:36px;top:154px;width:60px;height:20px;background:#fff;border:1px solid #7a7a7a"></div>
<div class="t " style="left:39.70px;top:159.13px;font-size:11.3px;color:#000;letter-spacing:-0.15px;">33''</div>
<div class="t " style="left:20.40px;top:177.23px;font-size:11.3px;color:#000;letter-spacing:-0.15px;">Cabinet Height</div>
<div style="position:absolute;left:36px;top:190px;width:60px;height:20px;background:#fff;border:1px solid #7a7a7a"></div>
<div class="t " style="left:39.70px;top:195.13px;font-size:11.3px;color:#000;letter-spacing:-0.15px;">94 1/2''</div>
<div class="t " style="left:20.40px;top:213.33px;font-size:11.3px;color:#000;letter-spacing:-0.15px;">Cabinet Depth</div>
<div style="position:absolute;left:36px;top:226px;width:60px;height:20px;background:#fff;border:1px solid #7a7a7a"></div>
<div class="t " style="left:39.70px;top:231.13px;font-size:11.3px;color:#000;letter-spacing:-0.15px;">25 1/2''</div>
<div style="position:absolute;left:117px;top:173px;width:22px;height:24px;background:#e1e1e1;border:1px solid #adadad"></div>
<div style="position:absolute;left:120px;top:177px;width:16px;height:16px;background:#fff"></div>
<svg style="left:117px;top:173px" width="22" height="24"><path d="M7.5,12 V8.5 A3.5,3.8 0 0 1 14.5,8.5 V12" fill="none" stroke="#000" stroke-width="2"/><rect x="5.5" y="11.5" width="11" height="8" rx="0.8" fill="#000"/></svg>
<div style="position:absolute;left:5px;top:253px;width:140px;height:40px;border:1px solid #dcdcdc"></div>
<div style="position:absolute;left:12px;top:247px;width:40px;height:10px;background:#f0f0f0"></div>
<div class="t " style="left:14.70px;top:251.13px;font-size:11.3px;color:#000;letter-spacing:-0.15px;">Explode</div>
<div class="t " style="left:15.50px;top:265.23px;font-size:11.3px;color:#000;letter-spacing:-0.15px;">0%</div>
<div class="t " style="left:59.50px;top:265.23px;font-size:11.3px;color:#000;letter-spacing:-0.15px;">50%</div>
<div class="t " style="left:103.30px;top:265.23px;font-size:11.3px;color:#000;letter-spacing:-0.15px;">100%</div>
<div style="position:absolute;left:19px;top:282px;width:110px;height:4px;background:#e7eaea;border:1px solid #d6d6d6"></div>
<div style="position:absolute;left:19px;top:280px;width:4px;height:8px;background:#0078d7"></div>
<div class="t " style="left:11.50px;top:300.83px;font-size:11.3px;color:#000;letter-spacing:-0.15px;">3-D Dist.</div>
<div style="position:absolute;left:69px;top:296px;width:60px;height:20px;background:#f0f0f0;border:1px solid #7a7a7a"></div>
<div class="t " style="left:8.40px;top:324.53px;font-size:11.3px;color:#000;letter-spacing:-0.15px;">Move Incr.</div>
<div style="position:absolute;left:69px;top:320px;width:60px;height:20px;background:#fff;border:1px solid #7a7a7a"></div>
<div class="t " style="left:72.50px;top:324.83px;font-size:11.3px;color:#000;letter-spacing:-0.15px;">0 1/8''</div>
<div style="position:absolute;left:7px;top:343px;width:136px;height:98px;border-top:1px solid #a0a0a0;border-left:1px solid #a0a0a0;border-right:1px solid #fff;border-bottom:1px solid #fff"></div>
<div style="position:absolute;left:8px;top:344px;width:134px;height:96px;border-top:1px solid #696969;border-left:1px solid #696969;border-right:1px solid #e3e3e3;border-bottom:1px solid #e3e3e3"></div>
<div style="position:absolute;left:15px;top:445px;width:120px;height:23px;border-top:1px solid #fff;border-left:1px solid #fff;border-right:1px solid #696969;border-bottom:1px solid #696969;background:#f0f0f0"></div>
<div style="position:absolute;left:16px;top:446px;width:118px;height:21px;border-right:1px solid #a0a0a0;border-bottom:1px solid #a0a0a0"></div>
<div style="position:absolute;left:19px;top:449px;width:112px;height:15px;background:#e1e1e1;border:1px solid #adadad"></div>
<div class="t " style="left:37.60px;top:452.13px;font-size:11.3px;color:#000;letter-spacing:-0.15px;">Enhanced View</div>
<div style="position:absolute;left:16px;top:472px;width:118px;height:18px;background:#e1e1e1;border:1px solid #adadad"></div>
<div class="t " style="left:37.60px;top:476.03px;font-size:11.3px;color:#000;letter-spacing:-0.15px;">Return to Room</div>
<div style="position:absolute;left:23px;top:497px;width:105px;height:21px;background:#fff;border:1px solid #7a7a7a"></div>
<div style="position:absolute;left:23px;top:517px;width:105px;height:22px;background:#fff;border:1px solid #7a7a7a"></div>
<div class="t " style="left:26.50px;top:502.03px;font-size:11.3px;color:#000;letter-spacing:-0.15px;">Reset View</div>
<div class="t " style="left:26.50px;top:523.13px;font-size:11.3px;color:#000;letter-spacing:-0.15px;">C-Plane Front</div>
<svg style="left:0;top:0" width="150" height="600"><g fill="none" stroke="#444" stroke-width="1"><polyline points="115,505.5 119,509.5 123,505.5"/><polyline points="115,526.5 119,530.5 123,526.5"/></g></svg>
<div style="position:absolute;left:2px;top:545px;width:113px;height:32px;border:1px solid #dcdcdc"></div>
<div style="position:absolute;left:12px;top:541px;width:84px;height:8px;background:#f0f0f0"></div>
<div class="t " style="left:14.40px;top:540.93px;font-size:11.3px;color:#000;letter-spacing:-0.15px;">Screen Shade</div>
<div style="position:absolute;left:11px;top:561px;width:64px;height:4px;background:#e7eaea;border:1px solid #d6d6d6"></div>
<div style="position:absolute;left:36px;top:558px;width:4px;height:9px;background:#0078d7"></div>
<div style="position:absolute;left:84px;top:554px;width:24px;height:18px;background:#e1e1e1;border:1px solid #adadad"></div>
<div style="position:absolute;left:86px;top:556px;width:20px;height:14px;background:linear-gradient(#2e2e2e 0,#2e2e2e 25%,#6b6b3a 25%,#3c3c4c 32%,#5a5a7a 45%,#7a7a7a 60%,#9a9a9a 75%,#c8c8c8 88%,#fff 100%)"></div>
<div style="position:absolute;left:120px;top:553px;width:25px;height:19px;background:#e1e1e1;border:1px solid #adadad"></div>
<div class="t " style="left:121.50px;top:556.82px;font-size:12.5px;color:#000;letter-spacing:-0.15px;transform:scaleX(0.8);transform-origin:left">CNC</div>
<div style="position:absolute;left:149px;top:112px;width:1px;height:908px;background:#f6f6f6"></div>
<div style="position:absolute;left:150px;top:112px;width:1754px;height:908px;background:#929292;border-top:1px solid #a0a0a0;border-left:1px solid #a0a0a0;border-right:1px solid #fff;border-bottom:1px solid #fff"></div>
<div style="position:absolute;left:151px;top:113px;width:1752px;height:906px;border-top:1px solid #696969;border-left:1px solid #696969"></div>
<svg style="left:0;top:0" width="1920" height="1080" shape-rendering="crispEdges"><line x1="175.5" y1="113" x2="175.5" y2="1019" stroke="#adadad" stroke-dasharray="10 6"/><line x1="269.5" y1="113" x2="269.5" y2="1019" stroke="#adadad" stroke-dasharray="10 6"/><line x1="363.5" y1="113" x2="363.5" y2="1019" stroke="#adadad" stroke-dasharray="10 6"/><line x1="457.5" y1="113" x2="457.5" y2="1019" stroke="#adadad" stroke-dasharray="10 6"/><line x1="551.5" y1="113" x2="551.5" y2="1019" stroke="#adadad" stroke-dasharray="10 6"/><line x1="645.5" y1="113" x2="645.5" y2="1019" stroke="#adadad" stroke-dasharray="10 6"/><line x1="738.5" y1="113" x2="738.5" y2="1019" stroke="#adadad" stroke-dasharray="10 6"/><line x1="832.5" y1="113" x2="832.5" y2="1019" stroke="#adadad" stroke-dasharray="10 6"/><line x1="926.5" y1="113" x2="926.5" y2="1019" stroke="#adadad" stroke-dasharray="10 6"/><line x1="1114.5" y1="113" x2="1114.5" y2="1019" stroke="#adadad" stroke-dasharray="10 6"/><line x1="1208.5" y1="113" x2="1208.5" y2="1019" stroke="#adadad" stroke-dasharray="10 6"/><line x1="1302.5" y1="113" x2="1302.5" y2="1019" stroke="#adadad" stroke-dasharray="10 6"/><line x1="1396.5" y1="113" x2="1396.5" y2="1019" stroke="#adadad" stroke-dasharray="10 6"/><line x1="1490.5" y1="113" x2="1490.5" y2="1019" stroke="#adadad" stroke-dasharray="10 6"/><line x1="1584.5" y1="113" x2="1584.5" y2="1019" stroke="#adadad" stroke-dasharray="10 6"/><line x1="1677.5" y1="113" x2="1677.5" y2="1019" stroke="#adadad" stroke-dasharray="10 6"/><line x1="1771.5" y1="113" x2="1771.5" y2="1019" stroke="#adadad" stroke-dasharray="10 6"/><line x1="1865.5" y1="113" x2="1865.5" y2="1019" stroke="#adadad" stroke-dasharray="10 6"/><line x1="152" y1="196.5" x2="1903" y2="196.5" stroke="#adadad" stroke-dasharray="10 6"/><line x1="152" y1="290.5" x2="1903" y2="290.5" stroke="#adadad" stroke-dasharray="10 6"/><line x1="152" y1="384.5" x2="1903" y2="384.5" stroke="#adadad" stroke-dasharray="10 6"/><line x1="152" y1="478.5" x2="1903" y2="478.5" stroke="#adadad" stroke-dasharray="10 6"/><line x1="152" y1="665.5" x2="1903" y2="665.5" stroke="#adadad" stroke-dasharray="10 6"/><line x1="152" y1="759.5" x2="1903" y2="759.5" stroke="#adadad" stroke-dasharray="10 6"/><line x1="152" y1="853.5" x2="1903" y2="853.5" stroke="#adadad" stroke-dasharray="10 6"/><line x1="152" y1="947.5" x2="1903" y2="947.5" stroke="#adadad" stroke-dasharray="10 6"/><rect x="152" y="571" width="1751" height="2" fill="#ff0000"/><rect x="1020" y="114" width="2" height="905" fill="#0000ff"/></svg>
<svg style="left:0;top:0" width="1920" height="1080" shape-rendering="crispEdges"><polygon points="881,168 1174,168 1174,174 1173,175 1154,192 882,192 882,184 881,184" fill="#fffff0"/><polygon points="1154,192 1172,175 1173,176 1163,197 1158,212 1154,216" fill="#54544c"/><rect x="881" y="173" width="292" height="1" fill="#d8d8c8"/><rect x="881" y="174" width="292" height="1" fill="#a3a394"/><rect x="881" y="175" width="291" height="1" fill="#d0d0c0"/><rect x="881" y="180" width="286" height="1" fill="#f4f4e6"/><rect x="881" y="181" width="285" height="1" fill="#ececde"/><rect x="881" y="182" width="284" height="1" fill="#dcdccc"/><rect x="881" y="183" width="283" height="1" fill="#bcbcac"/><rect x="882" y="185" width="279" height="1" fill="#e0e0d0"/><rect x="882" y="186" width="279" height="1" fill="#8f8f84"/><rect x="882" y="187" width="278" height="1" fill="#c8c8b8"/><rect x="882" y="188" width="277" height="1" fill="#f0f0e2"/><rect x="883" y="192" width="270" height="735" fill="#fffff0"/><rect x="882" y="192" width="1" height="736" fill="#000"/><rect x="1153" y="192" width="1" height="736" fill="#000"/><rect x="898" y="192" width="1" height="736" fill="#000"/><rect x="1140" y="192" width="1" height="736" fill="#000"/><rect x="884" y="927" width="268" height="29" fill="#fffff0"/><rect x="882" y="927" width="272" height="1" fill="#000"/><rect x="884" y="928" width="1" height="28" fill="#000"/><rect x="1151" y="928" width="1" height="28" fill="#000"/><rect x="884" y="955" width="268" height="1" fill="#000"/><rect x="894" y="203" width="20" height="84" fill="#fffff0"/><rect x="1000" y="203" width="21" height="84" fill="#fffff0"/><rect x="1020" y="203" width="20" height="84" fill="#fffff0"/><rect x="1126" y="203" width="20" height="84" fill="#fffff0"/><rect x="894" y="203" width="252" height="1" fill="#000"/><rect x="894" y="286" width="20" height="1" fill="#000"/><rect x="1000" y="286" width="21" height="1" fill="#000"/><rect x="1020" y="286" width="20" height="1" fill="#000"/><rect x="1126" y="286" width="20" height="1" fill="#000"/><rect x="894" y="203" width="1" height="84" fill="#000"/><rect x="913" y="203" width="1" height="84" fill="#000"/><rect x="1000" y="203" width="1" height="84" fill="#000"/><rect x="1039" y="203" width="1" height="84" fill="#000"/><rect x="1126" y="203" width="1" height="84" fill="#000"/><rect x="1145" y="203" width="1" height="84" fill="#000"/><rect x="1019" y="203" width="2" height="84" fill="#000"/><rect x="913" y="222" width="88" height="1" fill="#000"/><rect x="1039" y="222" width="88" height="1" fill="#000"/><rect x="899" y="287" width="5" height="7" fill="#54544c"/><rect x="904" y="287" width="1" height="7" fill="#000"/><rect x="905" y="287" width="5" height="7" fill="#fffff0"/><rect x="898" y="294" width="13" height="1" fill="#000"/><rect x="899" y="295" width="11" height="4" fill="#f2ead6"/><rect x="898" y="299" width="13" height="1" fill="#000"/><rect x="899" y="300" width="11" height="21" fill="#54544c"/><line x1="899.5" y1="310" x2="904.5" y2="321" stroke="#000" stroke-width="1.2"/><rect x="899" y="321" width="5" height="84" fill="#54544c"/><rect x="904" y="321" width="1" height="84" fill="#000"/><rect x="905" y="321" width="5" height="84" fill="#fffff0"/><rect x="898" y="405" width="11" height="1" fill="#000"/><rect x="910" y="287" width="1" height="107" fill="#000"/><rect x="910" y="393" width="3" height="1" fill="#000"/><rect x="905" y="290" width="5" height="1" fill="#a9a9a4"/><rect x="905" y="384" width="5" height="1" fill="#a9a9a4"/><rect x="1004" y="287" width="32" height="7" fill="#fffff0"/><rect x="1003" y="294" width="34" height="1" fill="#000"/><rect x="1004" y="295" width="32" height="4" fill="#f2ead6"/><rect x="1003" y="299" width="34" height="1" fill="#000"/><rect x="1004" y="300" width="32" height="21" fill="#54544c"/><rect x="1004" y="321" width="32" height="84" fill="#fffff0"/><rect x="1004" y="405" width="31" height="1" fill="#000"/><rect x="1003" y="287" width="1" height="107" fill="#000"/><rect x="1001" y="393" width="3" height="1" fill="#000"/><rect x="1036" y="287" width="1" height="107" fill="#000"/><rect x="1036" y="393" width="3" height="1" fill="#000"/><rect x="1004" y="290" width="6" height="1" fill="#a9a9a4"/><rect x="1016" y="290" width="10" height="1" fill="#a9a9a4"/><rect x="1032" y="290" width="4" height="1" fill="#a9a9a4"/><rect x="1004" y="384" width="6" height="1" fill="#a9a9a4"/><rect x="1016" y="384" width="10" height="1" fill="#a9a9a4"/><rect x="1032" y="384" width="4" height="1" fill="#a9a9a4"/><rect x="1130" y="287" width="6" height="7" fill="#fffff0"/><rect x="1136" y="287" width="1" height="7" fill="#000"/><rect x="1137" y="287" width="3" height="7" fill="#54544c"/><rect x="1129" y="294" width="12" height="1" fill="#000"/><rect x="1130" y="295" width="10" height="4" fill="#f2ead6"/><rect x="1129" y="299" width="12" height="1" fill="#000"/><rect x="1130" y="300" width="10" height="21" fill="#54544c"/><line x1="1140" y1="313" x2="1136.5" y2="321" stroke="#000" stroke-width="1.2"/><rect x="1130" y="321" width="6" height="84" fill="#fffff0"/><rect x="1136" y="321" width="1" height="84" fill="#000"/><rect x="1137" y="321" width="3" height="84" fill="#54544c"/><rect x="1131" y="405" width="10" height="1" fill="#000"/><rect x="1129" y="287" width="1" height="107" fill="#000"/><rect x="1127" y="393" width="3" height="1" fill="#000"/><rect x="1130" y="290" width="6" height="1" fill="#a9a9a4"/><rect x="1130" y="384" width="6" height="1" fill="#a9a9a4"/><rect x="912" y="390" width="89" height="19" fill="#fffff0"/><rect x="913" y="390" width="88" height="1" fill="#000"/><rect x="912" y="391" width="2" height="19" fill="#000"/><rect x="1000" y="391" width="1" height="19" fill="#000"/><rect x="910" y="409" width="95" height="1" fill="#000"/><rect x="1001" y="394" width="3" height="15" fill="#fffff0"/><rect x="1000" y="394" width="5" height="1" fill="#000"/><rect x="1004" y="394" width="1" height="16" fill="#000"/><rect x="1038" y="390" width="89" height="19" fill="#fffff0"/><rect x="1039" y="390" width="88" height="1" fill="#000"/><rect x="1038" y="391" width="2" height="19" fill="#000"/><rect x="1126" y="391" width="1" height="19" fill="#000"/><rect x="1036" y="409" width="95" height="1" fill="#000"/><rect x="1127" y="394" width="3" height="15" fill="#fffff0"/><rect x="1126" y="394" width="5" height="1" fill="#000"/><rect x="1130" y="394" width="1" height="16" fill="#000"/><rect x="894" y="417" width="20" height="232" fill="#fffff0"/><rect x="1000" y="417" width="21" height="232" fill="#fffff0"/><rect x="1020" y="417" width="20" height="232" fill="#fffff0"/><rect x="1126" y="417" width="20" height="232" fill="#fffff0"/><rect x="894" y="417" width="252" height="1" fill="#000"/><rect x="894" y="648" width="20" height="1" fill="#000"/><rect x="1000" y="648" width="21" height="1" fill="#000"/><rect x="1020" y="648" width="20" height="1" fill="#000"/><rect x="1126" y="648" width="20" height="1" fill="#000"/><rect x="894" y="417" width="1" height="232" fill="#000"/><rect x="913" y="417" width="1" height="232" fill="#000"/><rect x="1000" y="417" width="1" height="232" fill="#000"/><rect x="1039" y="417" width="1" height="232" fill="#000"/><rect x="1126" y="417" width="1" height="232" fill="#000"/><rect x="1145" y="417" width="1" height="232" fill="#000"/><rect x="1019" y="417" width="2" height="232" fill="#000"/><rect x="913" y="436" width="88" height="1" fill="#000"/><rect x="1039" y="436" width="88" height="1" fill="#000"/><rect x="899" y="649" width="5" height="236" fill="#54544c"/><rect x="904" y="649" width="1" height="236" fill="#000"/><rect x="905" y="649" width="5" height="235" fill="#fffff0"/><rect x="904" y="884" width="7" height="1" fill="#000"/><rect x="899" y="885" width="11" height="30" fill="#54544c"/><rect x="910" y="649" width="1" height="256" fill="#000"/><rect x="1004" y="649" width="32" height="235" fill="#fffff0"/><rect x="1003" y="884" width="34" height="1" fill="#000"/><rect x="1004" y="885" width="32" height="29" fill="#54544c"/><rect x="1004" y="914" width="22" height="2" fill="#000"/><rect x="1003" y="649" width="1" height="256" fill="#000"/><rect x="1036" y="649" width="1" height="256" fill="#000"/><rect x="1001" y="904" width="3" height="1" fill="#000"/><rect x="1036" y="904" width="3" height="1" fill="#000"/><rect x="1130" y="649" width="6" height="235" fill="#fffff0"/><rect x="1136" y="649" width="1" height="235" fill="#000"/><rect x="1137" y="649" width="3" height="236" fill="#54544c"/><rect x="1129" y="884" width="8" height="1" fill="#000"/><rect x="1130" y="885" width="10" height="29" fill="#54544c"/><rect x="1130" y="914" width="10" height="2" fill="#000"/><rect x="1129" y="649" width="1" height="256" fill="#000"/><rect x="1127" y="904" width="3" height="1" fill="#000"/><rect x="905" y="665" width="5" height="1" fill="#a9a9a4"/><rect x="1004" y="665" width="6" height="1" fill="#a9a9a4"/><rect x="1016" y="665" width="10" height="1" fill="#a9a9a4"/><rect x="1032" y="665" width="4" height="1" fill="#a9a9a4"/><rect x="1130" y="665" width="6" height="1" fill="#a9a9a4"/><rect x="905" y="759" width="5" height="1" fill="#a9a9a4"/><rect x="1004" y="759" width="6" height="1" fill="#a9a9a4"/><rect x="1016" y="759" width="10" height="1" fill="#a9a9a4"/><rect x="1032" y="759" width="4" height="1" fill="#a9a9a4"/><rect x="1130" y="759" width="6" height="1" fill="#a9a9a4"/><rect x="905" y="853" width="5" height="1" fill="#a9a9a4"/><rect x="1004" y="853" width="6" height="1" fill="#a9a9a4"/><rect x="1016" y="853" width="10" height="1" fill="#a9a9a4"/><rect x="1032" y="853" width="4" height="1" fill="#a9a9a4"/><rect x="1130" y="853" width="6" height="1" fill="#a9a9a4"/><rect x="901" y="901" width="8" height="18" fill="#fffff0"/><rect x="900.5" y="900.5" width="9" height="19" fill="none" stroke="#000"/><rect x="1027" y="901" width="8" height="18" fill="#fffff0"/><rect x="1026.5" y="900.5" width="9" height="19" fill="none" stroke="#000"/><rect x="912" y="901" width="89" height="19" fill="#fffff0"/><rect x="913" y="901" width="88" height="1" fill="#000"/><rect x="912" y="902" width="2" height="19" fill="#000"/><rect x="1000" y="902" width="1" height="19" fill="#000"/><rect x="910" y="920" width="95" height="1" fill="#000"/><rect x="1001" y="905" width="3" height="15" fill="#fffff0"/><rect x="1000" y="905" width="5" height="1" fill="#000"/><rect x="1004" y="905" width="1" height="16" fill="#000"/><rect x="1038" y="901" width="89" height="19" fill="#fffff0"/><rect x="1039" y="901" width="88" height="1" fill="#000"/><rect x="1038" y="902" width="2" height="19" fill="#000"/><rect x="1126" y="902" width="1" height="19" fill="#000"/><rect x="1036" y="920" width="95" height="1" fill="#000"/><rect x="1127" y="905" width="3" height="15" fill="#fffff0"/><rect x="1126" y="905" width="5" height="1" fill="#000"/><rect x="1130" y="905" width="1" height="16" fill="#000"/><rect x="894" y="417" width="252" height="1" fill="#000"/><rect x="898" y="405" width="1" height="13" fill="#000"/><rect x="1140" y="405" width="1" height="13" fill="#000"/><rect x="1020" y="287" width="2" height="7" fill="#0000ff"/><rect x="1020" y="312" width="2" height="93" fill="#0000ff"/><rect x="1020" y="649" width="2" height="250" fill="#0000ff"/></svg>
<svg style="left:500px;top:810px" width="130" height="120" viewBox="0 0 130 120"><path d="M20,12 L29.5,26 L39,12 M29.5,26 V35.5" fill="none" stroke="#6464ff" stroke-width="3"/><path d="M92,84 L110,107 M110,84 L92,107" fill="none" stroke="#ff6464" stroke-width="3"/><polygon points="29.5,38 24,51 35,51" fill="#0000ff"/><rect x="27" y="50" width="6" height="48" fill="#0000ff"/><path d="M38,75.5 H51 L43,89" fill="none" stroke="#ffff40" stroke-width="2.6"/><rect x="34" y="85" width="11" height="8" fill="#ffff40"/><ellipse cx="39" cy="90" rx="5" ry="3.5" fill="#505010"/><rect x="28" y="92" width="47" height="6" fill="#ff0000"/><polygon points="88,95 74,88.5 74,101.5" fill="#ff0000"/></svg>
<div style="position:absolute;left:1904px;top:112px;width:16px;height:908px;background:#f0f0f0"></div>
<div style="position:absolute;left:1906px;top:115px;width:12px;height:161px;background:#cdcdcd;border:1px solid #c0c0c0"></div>
<svg style="left:1905px;top:189px" width="14" height="14"><polyline points="4.5,3.5 9.5,7 4.5,10.5" fill="none" stroke="#808080" stroke-width="1"/></svg>
<div style="position:absolute;left:0px;top:1020px;width:1920px;height:20px;background:#f0f0f0"></div>
<div style="position:absolute;left:0px;top:1021px;width:1920px;height:1px;background:#dcdcdc"></div>
<div style="position:absolute;left:1919px;top:1023px;width:1px;height:17px;background:#dcdcdc"></div>
<div style="position:absolute;left:205px;top:1022px;width:1px;height:18px;background:#d8d8d8"></div>
<div style="position:absolute;left:1711px;top:1022px;width:1px;height:18px;background:#d8d8d8"></div>
<div class="t " style="left:1745.00px;top:1025.59px;font-size:12.3px;color:#1a1a1a;transform:scaleX(0.94);transform-origin:left">F1 for Help (Learning Mode OFF)</div>
<div style="position:absolute;left:0px;top:1040px;width:1920px;height:40px;background:#3a3c35"></div>
<div style="position:absolute;left:48px;top:1040px;width:288px;height:40px;background:#f2f2f2;border:1px solid #c4c4c4;border-right:none"></div>
<div class="t " style="left:88.50px;top:1053.81px;font-size:14.4px;color:#1e1e1e;">Type here to search</div>
<svg style="left:15px;top:1051px" width="18" height="18" viewBox="0 0 18 18"><polygon points="0.5,2.6 7.5,1.6 7.5,8.3 0.5,8.3" fill="#fff"/><polygon points="8.5,1.4 17,0.3 17,8.3 8.5,8.3" fill="#fff"/><polygon points="0.5,9.3 7.5,9.3 7.5,16 0.5,15" fill="#fff"/><polygon points="8.5,9.3 17,9.3 17,17.4 8.5,16.2" fill="#fff"/></svg>
<svg style="left:59px;top:1051px" width="18" height="18" viewBox="0 0 18 18"><circle cx="10.5" cy="6.8" r="5.3" fill="none" stroke="#222" stroke-width="1.3"/><path d="M6.8,10.6 L1,16.5" stroke="#222" stroke-width="1.5"/></svg>
<svg style="left:255px;top:1040px" width="82" height="40" viewBox="0 0 82 40"><defs><linearGradient id="sand" x1="0" y1="0" x2="0" y2="1"><stop offset="0" stop-color="#ffe2b0"/><stop offset="1" stop-color="#e0a050"/></linearGradient><linearGradient id="wat" x1="0" y1="0" x2="0" y2="1"><stop offset="0" stop-color="#9ee8c8"/><stop offset="1" stop-color="#3aa8e8"/></linearGradient><linearGradient id="chr" x1="0" y1="0" x2="0" y2="1"><stop offset="0" stop-color="#ff7040"/><stop offset="1" stop-color="#d83040"/></linearGradient></defs><path d="M10,34 Q25,24 40,24 Q58,24 72,34 Z" fill="url(#wat)"/><path d="M2,40 Q14,32 30,31.5 H55 Q75,32 81,40 Z" fill="url(#sand)"/><polygon points="12,17 23,17 27,30 18,31" fill="url(#chr)"/><path d="M11,16 L17,35 M21,16 L26,35 M25,25 L31,24 L34,33" stroke="#9a6a10" stroke-width="1.5" fill="none"/><polygon points="51,17 63,17 60,31 51,30" fill="url(#chr)"/><path d="M53,16 L48,35 M63,17 L58,35 M50,25 L43,24 L40,33" stroke="#9a6a10" stroke-width="1.5" fill="none"/><polygon points="68,11 70,11 73,34 67,34" fill="#c88010"/><path d="M69,12 Q62,6 57,11 M69,12 Q72,4 78,8 M69,12 Q66,3 70,2 M69,12 Q75,11 74,15 M69,12 Q63,11 62,14" stroke="#48a830" stroke-width="2.2" fill="none"/></svg>
<div style="position:absolute;left:336px;top:1040px;width:1px;height:40px;background:#2a2a2a"></div>
<svg style="left:352px;top:1052px" width="18" height="17" viewBox="0 0 18 17"><path d="M1,0.5 V2.5 H11 V0.5 M1,15.5 V13.5 H11 V15.5" fill="none" stroke="#fff" stroke-width="1.1"/><rect x="1" y="4.5" width="10" height="7" fill="none" stroke="#fff" stroke-width="1.1"/><path d="M14.5,0.5 V2 M14.5,8 V15.5" stroke="#fff" stroke-width="1.1"/><rect x="13.5" y="4" width="2" height="2.5" fill="#fff"/></svg>
<svg style="left:400px;top:1052px" width="22" height="16" viewBox="0 0 22 16"><rect x="0.5" y="0.5" width="21" height="15" fill="#4ab8f0"/><rect x="0.5" y="0.5" width="21" height="15" fill="none" stroke="#1a88d0" stroke-width="0.8"/><circle cx="6.5" cy="6" r="3.5" fill="#1a7acc"/><path d="M6.5,6 V2.5 A3.5,3.5 0 0 1 10,6 Z" fill="#f0b020"/><path d="M13,3 H19 M13,6 H19 M13,9 H19" stroke="#e8f4ff" stroke-width="1.3"/><path d="M3,12.5 H9" stroke="#f0b020" stroke-width="1.2"/><path d="M10,12.5 H19" stroke="#1a7acc" stroke-width="1.2"/></svg>
<svg style="left:447px;top:1048px" width="26" height="25" viewBox="0 0 26 25"><defs><linearGradient id="eg1" x1="0" y1="1" x2="1" y2="0"><stop offset="0" stop-color="#0c59a4"/><stop offset="1" stop-color="#2aa0e8"/></linearGradient><linearGradient id="eg2" x1="0" y1="0" x2="1" y2="0.5"><stop offset="0" stop-color="#2f9ee0"/><stop offset="0.6" stop-color="#3ac8b0"/><stop offset="1" stop-color="#78e060"/></linearGradient></defs><circle cx="12.5" cy="12.5" r="12" fill="url(#eg1)"/><path d="M0.8,11 Q2,1 12.5,0.5 Q24,0.8 24.5,12 Q24.5,17 19.5,17.5 Q14,17.5 14,14 Q14,11 11,10.5 Q5,10 2.5,15 Q1,13 0.8,11 Z" fill="url(#eg2)"/><path d="M7,17 Q7,12 12,12.5 Q14,13 14,15 Q15,19 20,19.5 Q21,20 21,20.5 Q17,24.5 12,24.2 Q7,23 7,17 Z" fill="#0b4f98"/></svg>
<svg style="left:497px;top:1048px" width="25" height="24" viewBox="0 0 25 24"><polygon points="0,6 12.5,0 25,6 25,23 0,23" fill="#0a64c0"/><polygon points="2,7 23,7 12.5,13" fill="#eaeaea"/><polygon points="0,7 12.5,15 25,7 25,23 0,23" fill="#28a8ea"/><polygon points="0,23 25,23 13,14" fill="#50c8f8"/></svg>
<svg style="left:545.5px;top:1048px" width="24" height="24" viewBox="0 0 24 24"><circle cx="12" cy="12" r="11.6" fill="#2ca01c"/><path d="M9,17.5 V14 M9,7.5 A4.2,4.2 0 1 0 9,16.5 H9.5 M15,4.5 V16.5 M15,7.5 H15.5 A4.2,4.2 0 1 1 15,16.5" fill="none" stroke="#fff" stroke-width="1.6"/><path d="M9,7 V20 M15,4 V17" stroke="#fff" stroke-width="1.6"/></svg>
<svg style="left:596px;top:1050px" width="22" height="20" viewBox="0 0 22 20"><path d="M0,2 Q0,1 1,1 H7 L9,3 H21 V4 H0 Z" fill="#e8a200"/><rect x="0" y="4" width="21.5" height="14.5" fill="#ffd35a"/><rect x="0" y="4" width="21.5" height="2" fill="#f7c340"/><path d="M4,19 V12 H17 V19 H14 V15 H7 V19 Z" fill="#4a9ce8"/></svg>
<svg style="left:645px;top:1049px" width="23" height="23" viewBox="0 0 23 23"><defs><linearGradient id="ph" x1="0" y1="0" x2="1" y2="1"><stop offset="0" stop-color="#1e8ee8"/><stop offset="1" stop-color="#8a5cd0"/></linearGradient></defs><rect x="0" y="0" width="22" height="22" rx="2" fill="url(#ph)"/><path d="M0,20 L10,10 L22,20 V22 H0 Z" fill="#30b8f0"/><path d="M0,22 L10,12 L18,22 Z" fill="#58d0f8"/><circle cx="16.5" cy="4.5" r="2" fill="#eef"/></svg>
<svg style="left:693px;top:1048px" width="24" height="24" viewBox="0 0 24 24"><circle cx="12" cy="12" r="12" fill="#db4437"/><path d="M12,12 L1.6,6 A12,12 0 0 0 12,24 Z" fill="#0f9d58"/><path d="M12,12 L12,24 A12,12 0 0 0 22.4,6 Z" fill="#ffcd40"/><circle cx="12" cy="12" r="5.2" fill="#fff"/><circle cx="12" cy="12" r="4.2" fill="#4285f4"/></svg>
<svg style="left:743px;top:1049px" width="23" height="23" viewBox="0 0 23 23"><defs><linearGradient id="it" x1="0" y1="0" x2="1" y2="1"><stop offset="0" stop-color="#f860a0"/><stop offset="0.5" stop-color="#c060e8"/><stop offset="1" stop-color="#40a0f8"/></linearGradient></defs><circle cx="11.5" cy="11.5" r="11" fill="url(#it)"/><circle cx="11.5" cy="11.5" r="9.5" fill="#fcfcfc"/><path d="M9,15 V6 L15,4.5 V13" stroke="url(#it)" stroke-width="1.4" fill="none"/><circle cx="7.8" cy="15.5" r="1.8" fill="#c060e8"/><circle cx="13.8" cy="13.5" r="1.8" fill="#50a0f0"/></svg>
<svg style="left:791px;top:1048px" width="24" height="24" viewBox="0 0 24 24"><rect width="24" height="24" fill="#6e6e6e"/><text x="12" y="14" font-family="Liberation Sans" font-weight="bold" font-size="13" fill="#111" text-anchor="middle">a</text><path d="M5,16.5 Q12,20 18.5,16.5" stroke="#f90" stroke-width="1.3" fill="none"/><path d="M17,15.5 L19,16.3 L18,18" stroke="#f90" stroke-width="1" fill="none"/></svg>
<svg style="left:840px;top:1048px" width="24" height="24" viewBox="0 0 24 24"><rect width="24" height="24" fill="#fff"/><path d="M8,7 V4 Q8,2 10,2 H14 Q16,2 16,4 V7" fill="none" stroke="#222" stroke-width="1.6"/><rect x="2" y="7" width="20" height="15" fill="#222"/><rect x="3" y="10" width="4.5" height="9" fill="#e8323c"/><rect x="7.5" y="10" width="4.5" height="9" fill="#1e7ad8"/><rect x="12" y="10" width="4.5" height="9" fill="#f0b020"/><rect x="16.5" y="10" width="4.5" height="9" fill="#78c030"/></svg>
<div style="position:absolute;left:877px;top:1040px;width:48px;height:40px;background:#62645e"></div>
<div class="t" style="left:888.5px;top:1028px;font-family:'Liberation Serif';font-style:italic;font-weight:bold;font-size:54px;color:#e2202a">e</div>
<svg style="left:937.5px;top:1048px" width="24" height="24" viewBox="0 0 24 24"><circle cx="12" cy="12" r="11.6" fill="#2ca01c"/><path d="M9,17.5 V14 M9,7.5 A4.2,4.2 0 1 0 9,16.5 H9.5 M15,4.5 V16.5 M15,7.5 H15.5 A4.2,4.2 0 1 1 15,16.5" fill="none" stroke="#fff" stroke-width="1.6"/><path d="M9,7 V20 M15,4 V17" stroke="#fff" stroke-width="1.6"/></svg>
<svg style="left:986px;top:1048px" width="26" height="25" viewBox="0 0 26 25"><rect x="8" y="1" width="17" height="23" rx="1" fill="#2b7cd3"/><rect x="8" y="1" width="17" height="6" fill="#41a5ee"/><rect x="8" y="7" width="17" height="6" fill="#2b7cd3"/><rect x="8" y="13" width="17" height="6" fill="#185abd"/><rect x="8" y="19" width="17" height="5" fill="#103f91"/><rect x="0.5" y="6" width="13" height="12.5" rx="1" fill="#185abd"/><text x="7" y="16" font-family="Liberation Sans" font-weight="bold" font-size="10" fill="#fff" text-anchor="middle">W</text></svg>
<div style="position:absolute;left:440px;top:1078px;width:40px;height:2px;background:#76c8f0"></div>
<div style="position:absolute;left:489px;top:1078px;width:40px;height:2px;background:#76c8f0"></div>
<div style="position:absolute;left:587px;top:1078px;width:40px;height:2px;background:#76c8f0"></div>
<div style="position:absolute;left:734px;top:1078px;width:40px;height:2px;background:#76c8f0"></div>
<div style="position:absolute;left:877px;top:1078px;width:48px;height:2px;background:#76c8f0"></div>
<div style="position:absolute;left:930px;top:1078px;width:40px;height:2px;background:#76c8f0"></div>
<div style="position:absolute;left:979px;top:1078px;width:40px;height:2px;background:#76c8f0"></div>
<svg style="left:1566px;top:1046px" width="26" height="26" viewBox="0 0 26 26"><defs><linearGradient id="sun" x1="0" y1="0" x2="1" y2="1"><stop offset="0" stop-color="#f8c020"/><stop offset="1" stop-color="#f06010"/></linearGradient></defs><circle cx="12" cy="14" r="10" fill="url(#sun)"/><circle cx="18" cy="7.5" r="5.8" fill="#c42b1c"/><path d="M17,5.5 L18.5,4.5 V10.5" stroke="#fff" stroke-width="1.1" fill="none"/></svg>
<svg style="left:1696px;top:1055px" width="14" height="9" viewBox="0 0 14 9"><polyline points="1,7.5 6.5,1.5 12,7.5" fill="none" stroke="#fff" stroke-width="1.2"/></svg>
<svg style="left:1721px;top:1051px" width="14" height="18" viewBox="0 0 14 18"><path d="M2.5,3 Q6,0.5 10,3 M2.5,15 Q6,17.5 10,15" fill="none" stroke="#fff" stroke-width="1"/><rect x="1" y="5" width="7.5" height="8" rx="1.5" fill="none" stroke="#fff" stroke-width="1.1"/><path d="M8.5,8 L12,6 V12 L8.5,10" fill="none" stroke="#fff" stroke-width="1.1"/></svg>
<svg style="left:1742px;top:1053px" width="18" height="16" viewBox="0 0 18 16"><rect x="4" y="1" width="13" height="9" fill="none" stroke="#fff" stroke-width="1.1"/><path d="M10.5,10 V13 M7,13.5 H14" stroke="#fff" stroke-width="1.1"/><rect x="1" y="0.5" width="4" height="3.5" fill="#3c3c38" stroke="#fff" stroke-width="1"/><path d="M2.5,4 V14" stroke="#fff" stroke-width="1.1"/></svg>
<svg style="left:1838px;top:1051px" width="18" height="18" viewBox="0 0 18 18"><path d="M1,1.2 H16.5 V12.3 H10.5 L8.8,14.8 L7,12.3 H1 Z" fill="none" stroke="#fff" stroke-width="1.3"/></svg>
<svg style="left:1875px;top:1050px" width="23" height="21" viewBox="0 0 23 21"><defs><linearGradient id="cpA" x1="0" y1="0" x2="0.3" y2="1"><stop offset="0" stop-color="#2a8af0"/><stop offset="0.45" stop-color="#30c0c0"/><stop offset="0.75" stop-color="#a0d040"/><stop offset="1" stop-color="#f8c020"/></linearGradient><linearGradient id="cpB" x1="0" y1="0" x2="0.3" y2="1"><stop offset="0" stop-color="#9050e8"/><stop offset="0.6" stop-color="#d050c8"/><stop offset="1" stop-color="#f06090"/></linearGradient></defs><path d="M5,1 H12 Q14.5,1 15.5,4 L16,6 H8 Q5.5,6 5,9 L3.5,17 Q1,17 1,14 L2.5,5 Q3,1 5,1 Z" fill="#1a70e0"/><path d="M4.5,4 Q5,1.5 8,1.5 H10 L7,14 Q6.5,17 3.5,17 Q1,17 1,14 Z" fill="url(#cpA)"/><path d="M11,6 H19 Q21.5,6 21,9 L19.5,16 Q19,18.5 16,18.5 H9.5 Z" fill="url(#cpB)"/><rect x="7.5" y="13.5" width="14.5" height="7" rx="1.2" fill="#ffc800"/><text x="14.8" y="19.3" font-family="Liberation Sans" font-weight="bold" font-size="6" fill="#111" text-anchor="middle">PRE</text></svg>
<div style="position:absolute;left:1915px;top:1040px;width:1px;height:40px;background:#888"></div>
<div class="t " style="left:1598.00px;top:1053.86px;font-size:13.4px;color:#ededed;">74°F  Sunny</div>
<div class="t " style="left:1770.60px;top:1044.91px;font-size:11.8px;color:#f0f0f0;">11:55 AM</div>
<div class="t " style="left:1772.00px;top:1063.04px;font-size:12px;color:#f0f0f0;">8/7/2024</div></body></html>
